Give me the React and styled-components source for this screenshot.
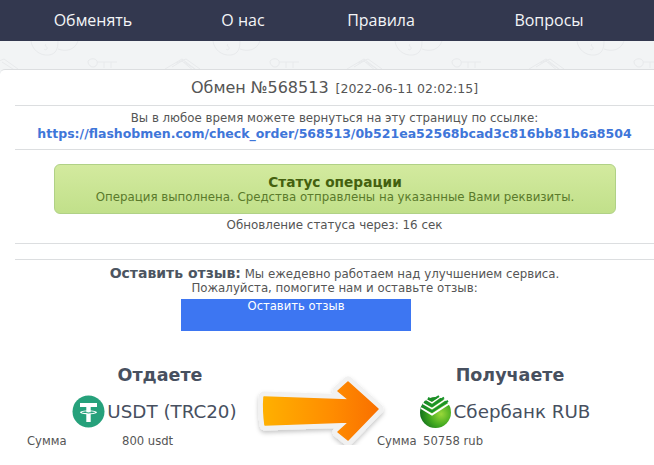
import React from 'react';
import styled, { createGlobalStyle } from 'styled-components';

const Global = createGlobalStyle`
  html, body { margin: 0; padding: 0; }
  body { width: 654px; height: 465px; overflow: hidden; background: #f2f4f5; font-family: "DejaVu Sans", Verdana, sans-serif; }
  * { box-sizing: border-box; }
`;
const Page = styled.div`
  width: 654px; height: 465px; display: flex; flex-direction: column; overflow: hidden; position: relative;
`;
const Nav = styled.nav`
  height: 41px; flex: none; background: #33384f; display: grid; grid-template-columns: 186px 114px 162px 174px; align-items: center;
`;
const NavItem = styled.a`
  color: #f4f5f7; font: 16px "Open Sans", sans-serif; text-align: center; line-height: 41px;
`;
const Pattern = styled.svg`
  position: absolute; top: 41px; left: 0; pointer-events: none;
`;
const Card = styled.main`
  position: relative; margin-top: 28px; flex: 1; background: #fff; border-top: 1px solid #dcdee0; border-radius: 5px 0 0 0; padding: 0 0 0 15px; color: #4c5561;
`;
const Title = styled.div`
  height: 36px; display: flex; justify-content: center; align-items: center; gap: 7px; color: #555; border-bottom: 1px solid #dcdee0;
`;
const TitleMain = styled.span`font-size: 16px;`;
const TitleDate = styled.span`font-size: 12.5px; padding-top: 2px;`;
const LinkBox = styled.div`
  height: 44px; padding-top: 5px; text-align: center; font-size: 11.8px; line-height: 15px; color: #555; border-bottom: 1px solid #dcdee0;
`;
const OrderLink = styled.a`
  display: block; font-weight: 700; font-size: 12.5px; color: #3f76d9; white-space: nowrap;
`;
const Status = styled.div`
  margin: 14px 38px 0 39px; height: 50px; border: 1px solid #b0d186; border-radius: 6px; background: linear-gradient(#d3ea9f, #c1e08a); text-align: center; padding-top: 9px;
`;
const StatusTitle = styled.div`font-weight: 700; font-size: 13.7px; line-height: 16px; color: #44600f;`;
const StatusText = styled.div`font-size: 11.8px; line-height: 15px; color: #5a7a2b;`;
const Refresh = styled.div`
  height: 30px; padding-top: 4px; text-align: center; font-size: 11.9px; line-height: 15px; color: #555; border-bottom: 1px solid #dcdee0;
`;
const Spacer = styled.div`height: 16px; border-bottom: 1px solid #dcdee0;`;
const Review = styled.div`
  padding-top: 6px; text-align: center; font-size: 11.8px; color: #555; display: flex; flex-direction: column; align-items: center;
`;
const ReviewLine = styled.div`height: 15px; line-height: 15px; white-space: nowrap;`;
const ReviewLead = styled.b`font-size: 14px; color: #4c5561;`;
const ReviewButton = styled.a`
  display: block; margin: 3px 77px 0 0; width: 230px; height: 32px; background: #3d76f2; color: #fff; font-size: 11.6px; line-height: 15px;
`;
const Exchange = styled.section`
  margin-top: 34px; display: grid; grid-template-columns: 290px 349px;
`;
const Side = styled.div`display: flex; flex-direction: column; align-items: center;`;
const SideRight = styled(Side)`padding-left: 61px;`;
const SideTitle = styled.div`font-weight: 700; font-size: 17.5px; line-height: 20px; color: #47505f;`;
const Currency = styled.div`
  margin: 10px 11px 0 0; height: 33px; display: flex; align-items: center; gap: 2px; font-size: 18.3px; color: #47505f; white-space: nowrap;
`;
const Amounts = styled.div`
  margin-top: 6px; width: 100%; display: grid; font-size: 11.6px; line-height: 14px; color: #555; white-space: nowrap;
`;
const LeftAmounts = styled(Amounts)`grid-template-columns: 95px 1fr; padding-left: 12px;`;
const RightAmounts = styled(Amounts)`grid-template-columns: 46px 1fr; padding-left: 11px;`;
const ArrowBox = styled.div`position: absolute; left: 250px; top: 370px; width: 140px; height: 75px;`;

const motifs = [0, 182, 364, 546];

const BgPattern = () => (
  <Pattern width="654" height="32" fill="none" stroke="#e8eaec" strokeWidth="1">
    {motifs.map((x) => (
      <g key={x} transform={`translate(${x} 0)`}>
        <path d="M31 0c1 8 8 15 18 14 7-1 9-6 9-14M58 8c8 3 17 1 20-8" />
        <path d="M46 3c-2 2 2 3 1 5-1 1-2 1-3 0" />
        <path d="M-6 22l10-4 14 10 -2 2M2 21l14 9" />
        <path d="M88 20c3-3 7-3 9 0 1 3-1 6-4 6-3 0-5-3-5-6zM97 21h20M104 21v6M111 21v6" />
        <path d="M165 28l17-10 13 10M172 26l10-6 12 10" />
      </g>
    ))}
  </Pattern>
);

const Tether = () => (
  <svg width="33" height="33" viewBox="0 0 33 33">
    <circle cx="16.5" cy="16.5" r="16" fill="#26a17b" />
    <path d="M8 8h17v4h-6.300v3.400c3.600.2 6.300 1 6.300 1.900s-2.700 1.700-6.300 1.900V27h-4.400v-7.800C10.700 19 8 18.200 8 17.300s2.700-1.700 6.300-1.900V12H8z" fill="#fff" />
    <path d="M14.300 16.300c-2.500.2-4.300.6-4.300 1 0 .6 2.900 1.100 6.500 1.100s6.500-.5 6.500-1.100c0-.4-1.800-.8-4.300-1v1c-1.400.1-3 .1-4.400 0z" fill="#26a17b" />
  </svg>
);

const Sber = () => (
  <svg width="33" height="33" viewBox="0 0 33 33">
    <defs>
      <radialGradient id="sb" cx="0.68" cy="0.55" r="0.72">
        <stop offset="0" stopColor="#9ad83a" />
        <stop offset="0.5" stopColor="#45ab20" />
        <stop offset="1" stopColor="#0c6a1b" />
      </radialGradient>
    </defs>
    <circle cx="16.5" cy="17.500" r="15.500" fill="url(#sb)" />
    <g fill="none" strokeLinejoin="miter">
      <path d="M2 13l11 6.500L31 8" stroke="#fff" strokeWidth="2" />
      <path d="M3 10.500l10 6L29 5.800" stroke="#18922a" strokeWidth="2" />
      <path d="M4 8.500l9 5.200L27.500 3.800" stroke="#fff" strokeWidth="1.500" />
      <path d="M5.500 6.300l7.500 4.500L25 2.500" stroke="#18922a" strokeWidth="2" />
      <path d="M7 4.500l6 3.400L22.500 1.300" stroke="#fff" strokeWidth="1.400" />
      <path d="M9 2.800l4 2.400 7-4.200" stroke="#18922a" strokeWidth="2" />
    </g>
  </svg>
);

const arrowPath = 'M14 27 L99 30 L88 21 L98 12 L128 39 L98 70 L88 62 L99 52 L15 55 Q13 40 14 27Z';

const BigArrow = () => (
  <svg width="140" height="75" viewBox="0 0 140 75">
    <defs>
      <linearGradient id="ar" x1="0" x2="1" y1="0" y2="0">
        <stop offset="0" stopColor="#ffb000" />
        <stop offset="0.6" stopColor="#ff8c00" />
        <stop offset="1" stopColor="#f97000" />
      </linearGradient>
      <filter id="ds" x="-10%" y="-15%" width="120%" height="140%">
        <feDropShadow dx="0" dy="2.500" stdDeviation="2" floodColor="#000" floodOpacity="0.22" />
      </filter>
    </defs>
    <path d={arrowPath} fill="#f1f1f1" stroke="#f1f1f1" strokeWidth="11" strokeLinejoin="round" filter="url(#ds)" />
    <path d={arrowPath} fill="url(#ar)" stroke="url(#ar)" strokeWidth="1.500" strokeLinejoin="round" />
  </svg>
);

export default function App() {
  return (
    <Page>
      <Global />
      <Nav>
        <NavItem>Обменять</NavItem>
        <NavItem>О нас</NavItem>
        <NavItem>Правила</NavItem>
        <NavItem>Вопросы</NavItem>
      </Nav>
      <BgPattern />
      <Card>
        <Title>
          <TitleMain>Обмен №568513</TitleMain>
          <TitleDate>[2022-06-11 02:02:15]</TitleDate>
        </Title>
        <LinkBox>
          Вы в любое время можете вернуться на эту страницу по ссылке:
          <OrderLink>https://flashobmen.com/check_order/568513/0b521ea52568bcad3c816bb81b6a8504</OrderLink>
        </LinkBox>
        <Status>
          <StatusTitle>Статус операции</StatusTitle>
          <StatusText>Операция выполнена. Средства отправлены на указанные Вами реквизиты.</StatusText>
        </Status>
        <Refresh>Обновление статуса через: 16 сек</Refresh>
        <Spacer />
        <Review>
          <ReviewLine><ReviewLead>Оставить отзыв:</ReviewLead> Мы ежедевно работаем над улучшением сервиса.</ReviewLine>
          <ReviewLine>Пожалуйста, помогите нам и оставьте отзыв:</ReviewLine>
          <ReviewButton>Оставить отзыв</ReviewButton>
        </Review>
        <Exchange>
          <Side>
            <SideTitle>Отдаете</SideTitle>
            <Currency><Tether />USDT (TRC20)</Currency>
            <LeftAmounts><span>Сумма</span><span>800 usdt</span></LeftAmounts>
          </Side>
          <SideRight>
            <SideTitle>Получаете</SideTitle>
            <Currency><Sber />Сбербанк RUB</Currency>
            <RightAmounts><span>Сумма</span><span>50758 rub</span></RightAmounts>
          </SideRight>
        </Exchange>
      </Card>
      <ArrowBox><BigArrow /></ArrowBox>
    </Page>
  );
}
